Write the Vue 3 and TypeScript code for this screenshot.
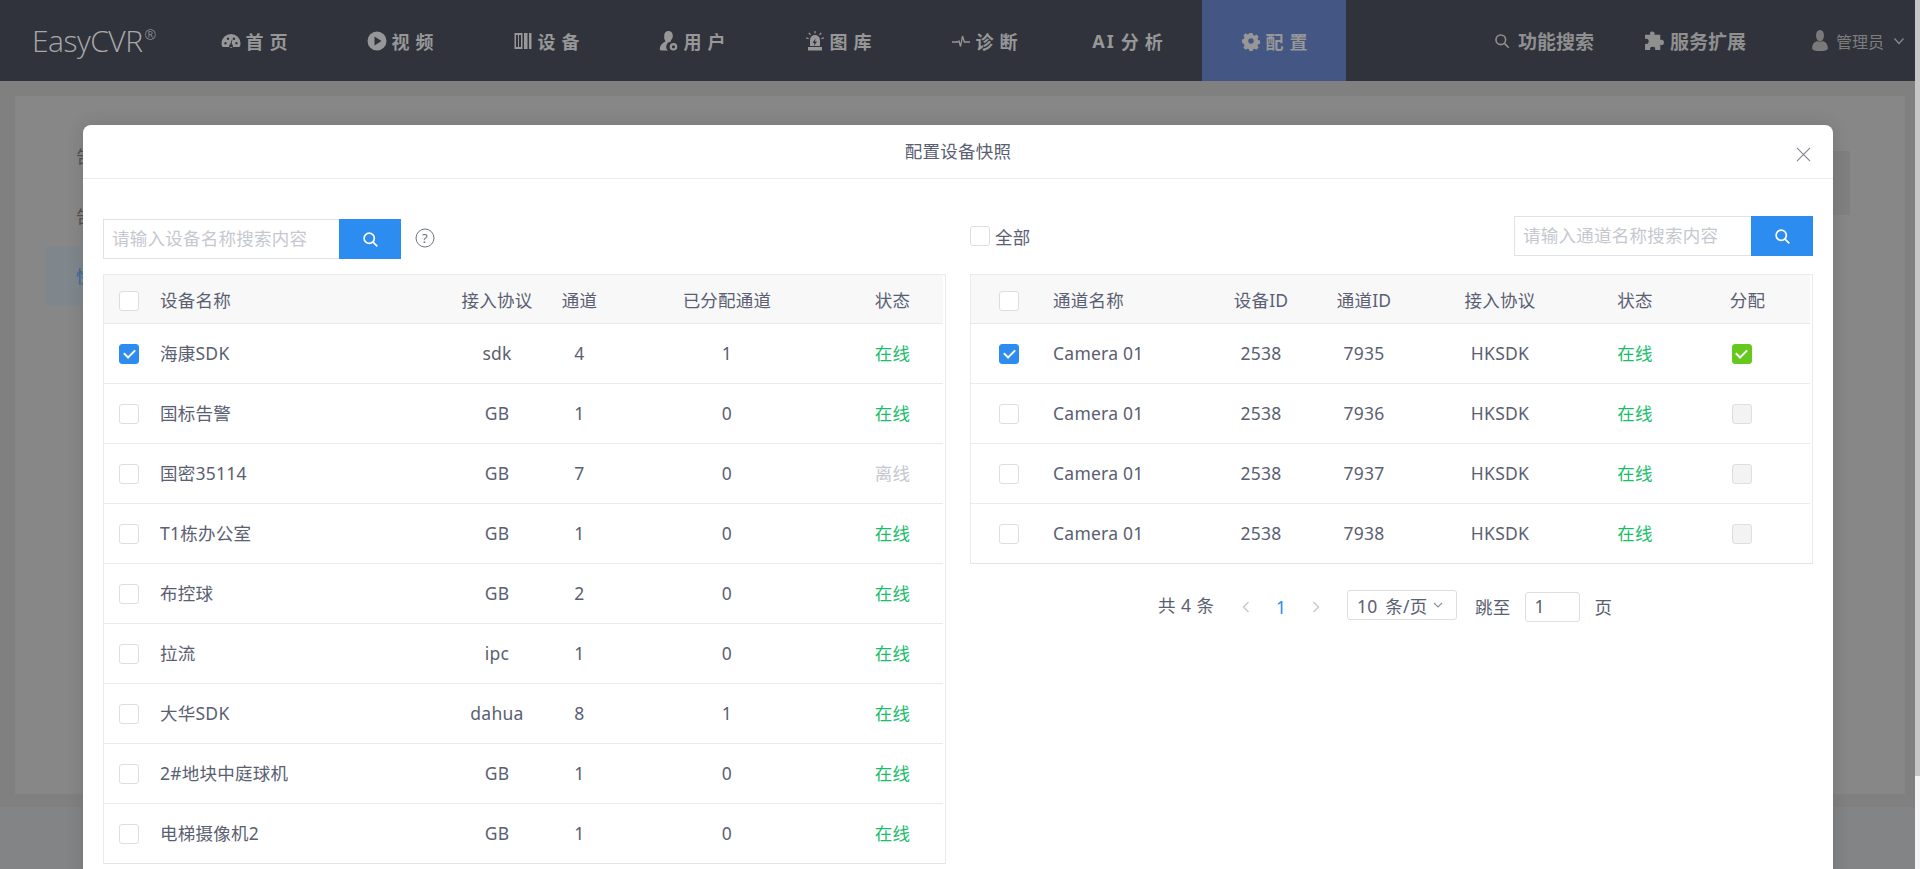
<script setup lang="ts">
interface Device { name: string; proto: string; channels: number; assigned: number; online: boolean; checked?: boolean }
interface Channel { id: number; checked?: boolean; assigned?: boolean }
interface NavItem { label: string; icon?: string; prefix?: string; active?: boolean }

const navItems: NavItem[] = [
  { label: '首页', icon: 'gauge' },
  { label: '视频', icon: 'play' },
  { label: '设备', icon: 'device' },
  { label: '用户', icon: 'user' },
  { label: '图库', icon: 'alarm' },
  { label: '诊断', icon: 'pulse' },
  { label: '分析', prefix: 'AI' },
  { label: '配置', icon: 'gear', active: true },
]

const devices: Device[] = [
  { name: '海康SDK', proto: 'sdk', channels: 4, assigned: 1, online: true, checked: true },
  { name: '国标告警', proto: 'GB', channels: 1, assigned: 0, online: true },
  { name: '国密35114', proto: 'GB', channels: 7, assigned: 0, online: false },
  { name: 'T1栋办公室', proto: 'GB', channels: 1, assigned: 0, online: true },
  { name: '布控球', proto: 'GB', channels: 2, assigned: 0, online: true },
  { name: '拉流', proto: 'ipc', channels: 1, assigned: 0, online: true },
  { name: '大华SDK', proto: 'dahua', channels: 8, assigned: 1, online: true },
  { name: '2#地块中庭球机', proto: 'GB', channels: 1, assigned: 0, online: true },
  { name: '电梯摄像机2', proto: 'GB', channels: 1, assigned: 0, online: true },
]

const channels: Channel[] = [
  { id: 7935, checked: true, assigned: true },
  { id: 7936 },
  { id: 7937 },
  { id: 7938 },
]
</script>

<template>
  <div class="page">
    <header class="topbar">
      <div class="logo">EasyCVR<sup>®</sup></div>
      <nav class="nav">
        <a v-for="item in navItems" :key="item.label" class="nav-item" :class="{ active: item.active, 'nav-ai': item.prefix }">
          <svg v-if="item.icon === 'gauge'" viewBox="0 0 20 20" class="nav-icon"><path fill-rule="evenodd" d="M10 3a9.500 9.500 0 0 0-9.500 9.500c0 1.800.5 3 1.200 3.500h16.600c.7-.5 1.200-1.700 1.200-3.500A9.500 9.500 0 0 0 10 3zM4.500 11a1.200 1.200 0 1 1 0 2.400 1.200 1.200 0 0 1 0-2.400zM7 6.500a1.200 1.200 0 1 1 0 2.400 1.200 1.200 0 0 1 0-2.400zm6 0a1.200 1.200 0 1 1 0 2.400 1.200 1.200 0 0 1 0-2.400zm2.500 4.500a1.200 1.200 0 1 1 0 2.400 1.200 1.200 0 0 1 0-2.400zM11.500 7l-.8 6.200a1.800 1.800 0 1 1-1.500.1z"/></svg>
          <svg v-else-if="item.icon === 'play'" viewBox="0 0 20 20" class="nav-icon"><path fill-rule="evenodd" d="M10 .5a9.500 9.500 0 1 0 0 19 9.500 9.500 0 0 0 0-19zM7.500 5.500l7 4.500-7 4.500z"/></svg>
          <svg v-else-if="item.icon === 'device'" viewBox="0 0 20 20" class="nav-icon"><path fill-rule="evenodd" d="M1.500 2h8v16h-8zM3 4v12h2V4zM6 4v12h2V4zM11 2h3.500v16H11zM16 2h2.500v16H16z"/></svg>
          <svg v-else-if="item.icon === 'user'" viewBox="0 0 20 20" class="nav-icon"><path fill-rule="evenodd" d="M9.500 0c2.600 0 4.300 2 4.300 4.800 0 1.900-.8 3.700-2 4.600v1.300a5 5 0 0 0-2.800 8.800H2.200c-.9 0-1.400-.5-1.400-1.400 0-3.400 2.300-6.200 5.400-7.400V9.400c-1.200-.9-1-2.700-1-4.600C5.200 2 6.900 0 9.500 0zM14.500 12a3.800 3.800 0 1 1 0 7.600 3.800 3.800 0 0 1 0-7.600zm0 2.200a1.600 1.600 0 1 0 0 3.200 1.600 1.600 0 0 0 0-3.200z"/></svg>
          <svg v-else-if="item.icon === 'alarm'" viewBox="0 0 20 20" class="nav-icon"><path fill-rule="evenodd" d="M5 9a5 5 0 0 1 10 0v6H5zM10.500 7.500l-3 4.500h2l-.5 3 3-4.500h-2zM3 16h14v3.500H3zM9.400 0h1.200v2.500H9.400zM3.300 2.300l1-.8L6 3.500l-1 .8zM16.700 2.300l-1-.8L14 3.500l1 .8zM1 7.500l.3-1.200 2.400.7-.3 1.200zM19 7.500l-.3-1.200-2.400.7.3 1.200z"/></svg>
          <svg v-else-if="item.icon === 'pulse'" viewBox="0 0 20 20" class="nav-icon line"><path d="M1 11h5.500l1.500-1 1.500 5.500L11.500 5l1.800 6H19"/></svg>
          <svg v-else-if="item.icon === 'gear'" viewBox="0 0 20 20" class="nav-icon"><path fill-rule="evenodd" d="M8.200 1h3.600l.5 2.400 1.700.7 2-1.300 2.500 2.500-1.300 2 .7 1.700 2.100.5v3.600l-2.100.5-.7 1.700 1.300 2-2.500 2.500-2-1.300-1.700.7-.5 2.100H8.200l-.5-2.100-1.700-.7-2 1.300-2.500-2.500 1.300-2-.7-1.700L0 11.800V8.200l2.100-.5.700-1.700-1.300-2L4 1.500l2 1.300 1.700-.7zM10 7a3 3 0 1 0 0 6 3 3 0 0 0 0-6z" transform="translate(1 1) scale(.9)"/></svg>
          <span v-if="item.prefix" class="nav-prefix">{{ item.prefix }}</span>
          <span class="nav-label">{{ item.label }}</span>
        </a>
      </nav>
      <div class="tools">
        <a class="tool">
          <svg viewBox="0 0 20 20" class="tool-icon line"><circle cx="8.500" cy="8.500" r="6"/><path d="M13 13l5.500 5.500"/></svg>
          功能搜索
        </a>
        <a class="tool tool-ext">
          <svg viewBox="0 0 20 20" class="tool-icon puzzle"><path d="M7.500 1.500c2 0 3 1 2.500 3h5.500v5c2-.8 3.500.3 3.500 2.300s-1.500 3-3.500 2.200v5h-5c.7-2-.3-3-2.200-3s-3 1-2.300 3H1v-6c2 .8 3.500-.2 3.500-2.200S3 7.800 1 8.500v-4h4.900c-.5-2 .1-3 1.600-3z"/></svg>
          服务扩展
        </a>
        <a class="account">
          <svg viewBox="0 0 20 24" class="account-icon"><path d="M10 0c3 0 4.500 2.500 4.500 6s-1.500 7-4.500 7-4.500-3.500-4.500-7S7 0 10 0zM1 21c0-5 2.500-7.500 6-8.500 1.800 1.300 4.200 1.300 6 0 3.500 1 6 3.500 6 8.500 0 2-4 3-9 3s-9-1-9-3z"/></svg>
          <span>管理员</span>
          <svg viewBox="0 0 12 12" class="caret"><path d="M1.500 3.500L6 8.500l4.500-5"/></svg>
        </a>
      </div>
    </header>

    <main class="content">
      <div class="panel">
        <div class="side">
          <p>告警计划</p>
          <p>告警查询</p>
          <p class="side-active">快照配置</p>
        </div>
        <div class="panel-action"></div>
      </div>
    </main>

    <section class="modal">
      <div class="modal-head">
        <span class="modal-title">配置设备快照</span>
        <svg viewBox="0 0 16 16" class="close"><path d="M1 1l14 14M15 1L1 15"/></svg>
      </div>
      <div class="modal-body">
        <div class="col">
          <div class="toolbar toolbar-left">
            <div class="search">
              <span class="search-input">请输入设备名称搜索内容</span>
              <span class="search-btn"><svg viewBox="0 0 20 20"><circle cx="8.500" cy="8.500" r="6"/><path d="M13 13l5 5"/></svg></span>
            </div>
            <svg viewBox="0 0 20 20" class="help"><circle cx="10" cy="10" r="9"/><text x="10" y="14.500" text-anchor="middle">?</text></svg>
          </div>
          <div class="grid-wrap">
            <table class="grid">
              <colgroup>
                <col style="width: 50px" /><col style="width: 287px" /><col style="width: 112px" /><col style="width: 53px" /><col style="width: 242px" /><col />
              </colgroup>
              <thead>
                <tr>
                  <th><i class="box"></i></th>
                  <th class="left">设备名称</th>
                  <th>接入协议</th>
                  <th>通道</th>
                  <th>已分配通道</th>
                  <th class="last">状态</th>
                </tr>
              </thead>
              <tbody>
                <tr v-for="d in devices" :key="d.name">
                  <td><i class="box" :class="{ checked: d.checked }"></i></td>
                  <td class="left">{{ d.name }}</td>
                  <td>{{ d.proto }}</td>
                  <td>{{ d.channels }}</td>
                  <td>{{ d.assigned }}</td>
                  <td class="last" :class="d.online ? 'online' : 'offline'">{{ d.online ? '在线' : '离线' }}</td>
                </tr>
              </tbody>
            </table>
          </div>
        </div>

        <div class="col">
          <div class="toolbar toolbar-right">
            <label class="all"><i class="box"></i>全部</label>
            <div class="search search-wide">
              <span class="search-input">请输入通道名称搜索内容</span>
              <span class="search-btn"><svg viewBox="0 0 20 20"><circle cx="8.500" cy="8.500" r="6"/><path d="M13 13l5 5"/></svg></span>
            </div>
          </div>
          <div class="grid-wrap">
            <table class="grid">
              <colgroup>
                <col style="width: 76px" /><col style="width: 164px" /><col style="width: 100px" /><col style="width: 106px" /><col style="width: 166px" /><col style="width: 104px" /><col />
              </colgroup>
              <thead>
                <tr>
                  <th><i class="box"></i></th>
                  <th class="left">通道名称</th>
                  <th>设备ID</th>
                  <th>通道ID</th>
                  <th>接入协议</th>
                  <th>状态</th>
                  <th class="assign-head">分配</th>
                </tr>
              </thead>
              <tbody>
                <tr v-for="c in channels" :key="c.id">
                  <td><i class="box" :class="{ checked: c.checked }"></i></td>
                  <td class="left">Camera 01</td>
                  <td>2538</td>
                  <td>{{ c.id }}</td>
                  <td>HKSDK</td>
                  <td class="online">在线</td>
                  <td class="assign"><i class="box" :class="c.assigned ? 'assigned' : 'disabled'"></i></td>
                </tr>
              </tbody>
            </table>
          </div>
          <div class="pager">
            <span class="total">共 4 条</span>
            <svg viewBox="0 0 10 14" class="arrow"><path d="M7.500 2L2.500 7l5 5"/></svg>
            <span class="page-no">1</span>
            <svg viewBox="0 0 10 14" class="arrow"><path d="M2.500 2l5 5-5 5"/></svg>
            <span class="size">10 条/页<svg viewBox="0 0 12 12"><path d="M2 4l4 4 4-4"/></svg></span>
            <span class="jump">跳至</span>
            <span class="jump-input">1</span>
            <span class="jump-unit">页</span>
          </div>
        </div>
      </div>
    </section>

    <div class="scrollbar"><div class="thumb"></div></div>
  </div>
</template>

<style>
html, body { margin: 0; overflow: hidden; }
</style>

<style scoped>
.page {
  position: relative;
  width: 1920px;
  height: 869px;
  overflow: hidden;
  background: #838486;
  font-family: "Noto Sans", "Noto Sans CJK SC", sans-serif;
  font-size: 17.5px;
  letter-spacing: .25px;
  color: #5a6072;
}
.topbar {
  height: 81px;
  display: flex;
  align-items: center;
  background: #30333c;
  color: #979797;
}
.logo {
  width: 181px;
  padding-left: 32px;
  box-sizing: border-box;
  font-family: "Open Sans", sans-serif;
  font-size: 30px;
  font-weight: 300;
  letter-spacing: -.5px;
  color: #a8a8a8;
  white-space: nowrap;
}
.logo sup { font-size: 14px; vertical-align: 12px; line-height: 0; margin-left: 2px; }
.nav { display: flex; height: 100%; }
.nav-item {
  width: 146px;
  display: flex;
  align-items: center;
  justify-content: center;
  gap: 5px;
  font-weight: 700;
  font-size: 18px;
  letter-spacing: 6px;
}
.nav-item.nav-ai { width: 141px; margin-right: 4px; }
.nav-item.active { width: 144px; background: #445684; }
.nav-prefix { letter-spacing: 2px; }
.nav-label { margin-right: -6px; white-space: nowrap; }
.nav-icon { width: 20px; height: 20px; fill: #979797; flex: none; }
.nav-icon.line { fill: none; stroke: #979797; stroke-width: 1.300; }
.tools { margin-left: auto; display: flex; align-items: center; height: 100%; padding-right: 15px; }
.tool {
  display: flex;
  align-items: center;
  gap: 8px;
  font-weight: 700;
  font-size: 19px;
  letter-spacing: 0;
  margin-right: 50px;
  color: #8f8f8f;
  white-space: nowrap;
}
.tool-ext { gap: 5px; margin-right: 65px; }
.tool-icon { width: 16px; height: 16px; }
.tool-icon.line { fill: none; stroke: #8f8f8f; stroke-width: 2; }
.tool-icon.puzzle { width: 21px; height: 21px; fill: #8f8f8f; }
.account { display: flex; align-items: center; font-size: 16px; letter-spacing: 0; color: #7d7d7d; }
.account-icon { width: 18px; height: 21px; fill: #7a7a7a; margin-right: 7px; }
.caret { width: 12px; height: 12px; margin-left: 9px; fill: none; stroke: #8a8a8a; stroke-width: 1.200; }

.content { height: 726px; padding: 15px 5px 0 15px; box-sizing: border-box; background: #808080; }
.panel {
  height: 698px;
  margin-right: 10px;
  background: #878787;
  padding-top: 30px;
  box-sizing: border-box;
  display: flex;
  justify-content: space-between;
  align-items: flex-start;
}
.side { width: 200px; margin-left: 30px; color: #505050; }
.side p { margin: 0; height: 60px; line-height: 60px; padding-left: 31px; white-space: nowrap; }
.side .side-active { background: #7f878c; color: #35699a; }
.panel-action { width: 200px; height: 64px; margin: 25px 55px 0 0; background: #808080; }

.modal {
  position: absolute;
  left: 83px;
  top: 125px;
  width: 1750px;
  height: 800px;
  background: #fff;
  border-radius: 8px;
  box-shadow: 0 0 18px rgba(0, 0, 0, .12);
}
.modal-head {
  position: relative;
  height: 53px;
  border-bottom: 1px solid #e8eaec;
  display: flex;
  align-items: center;
  justify-content: center;
}
.modal-title { font-size: 17.5px; margin-top: -2px; }
.close {
  position: absolute;
  right: 22px;
  top: 22px;
  width: 15px;
  height: 15px;
  fill: none;
  stroke: #7e8490;
  stroke-width: 1.200;
}
.modal-body {
  display: flex;
  gap: 24px;
  padding: 31px 20px 0;
}
.col { flex: none; width: 843px; }
.toolbar { height: 64px; display: flex; box-sizing: border-box; }
.toolbar-left { align-items: flex-start; padding-top: 9px; }
.toolbar-right { justify-content: space-between; align-items: flex-start; padding-top: 6px; }
.search { display: flex; height: 40px; width: 298px; }
.search-wide { width: 299px; }
.search-input {
  flex: 1;
  border: 1px solid #dfe2e8;
  border-right: none;
  padding-left: 8px;
  line-height: 36px;
  color: #c5c8ce;
  white-space: nowrap;
}
.search-btn {
  width: 62px;
  background: #2d8cf0;
  display: flex;
  align-items: center;
  justify-content: center;
}
.search-btn svg { width: 17px; height: 17px; fill: none; stroke: #fff; stroke-width: 2; }
.help { width: 20px; height: 20px; margin: 9px 0 0 14px; fill: none; stroke: #6d7280; stroke-width: 1; }
.help text { fill: #6d7280; stroke: none; font-size: 13px; }
.all { display: flex; align-items: center; gap: 5px; margin-top: 4px; height: 32px; }

.box {
  display: inline-block;
  box-sizing: border-box;
  position: relative;
  width: 20px;
  height: 20px;
  border: 1px solid #dcdee2;
  border-radius: 3px;
  background: #fff;
  vertical-align: middle;
}
.grid td .box { top: -1px; }
.box.checked { background: #2d8cf0; border-color: #2d8cf0; }
.box.assigned { background: #64c91c; border-color: #64c91c; }
.box.disabled { background: #f3f3f3; }
.box.checked::after, .box.assigned::after {
  content: "";
  position: absolute;
  left: 5.500px;
  top: 2.500px;
  width: 5px;
  height: 9px;
  border: solid #fff;
  border-width: 0 2px 2px 0;
  transform: rotate(45deg);
}

.grid-wrap {
  box-sizing: border-box;
  width: 843px;
  border: 1px solid #e8eaec;
  border-bottom-color: #e2e4e8;
  padding-right: 2px;
}
.grid {
  width: 839px;
  table-layout: fixed;
  border-collapse: separate;
  border-spacing: 0;
}
.grid th, .grid td { padding: 0; text-align: center; border-bottom: 1px solid #e8eaec; font-weight: 400; }
.grid tbody tr:last-child td { border-bottom: none; }
.grid th { height: 48px; background: #f8f8f9; }
.grid td { padding-bottom: 2px; box-sizing: content-box; height: 57px; }
.grid .left { text-align: left; padding-left: 6px; }
.grid .last { padding-right: 6px; }
.grid .assign { padding-right: 14px; }
.grid .assign-head { padding-right: 2px; }
.online { color: #19be6b; }
.offline { color: #c5c8ce; }

.pager {
  display: flex;
  align-items: center;
  padding-left: 188px;
  margin-top: 27px;
  height: 32px;
}
.total { width: 56px; margin-right: 27px; margin-top: -6px; word-spacing: .5px; white-space: nowrap; }
.arrow { flex: none; width: 10px; height: 14px; fill: none; stroke: #c5c8ce; stroke-width: 1.400; }
.page-no { width: 10px; color: #2d8cf0; margin: 0 25px; }
.size {
  display: flex;
  align-items: center;
  box-sizing: border-box;
  width: 110px;
  height: 30px;
  margin: -4px 18px 0 26px;
  padding-left: 9px;
  border: 1px solid #dcdee2;
  border-radius: 3px;
  white-space: nowrap;
  word-spacing: 3px;
}
.size svg { width: 12px; height: 12px; margin-left: 4px; fill: none; stroke: #8e929c; stroke-width: 1.200; }
.jump { margin: -2px 14px 0 0; }
.jump-unit { margin-top: -2px; }
.jump-input {
  box-sizing: border-box;
  width: 55px;
  height: 30px;
  line-height: 27px;
  padding-left: 9px;
  margin-right: 15px;
  border: 1px solid #dcdee2;
  border-radius: 3px;
}

.scrollbar {
  position: absolute;
  right: 0;
  top: 0;
  bottom: 0;
  width: 5px;
  background: #f4f4f4;
}
.thumb { height: 776px; background: #c6c6c6; }
</style>
